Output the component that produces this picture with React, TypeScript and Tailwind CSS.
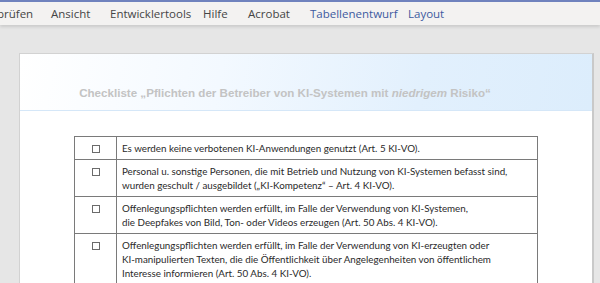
import React from "react";

const tabs = [
  { label: "prüfen", w: "w-[54px]", ml: "-ml-[3px]", active: false },
  { label: "Ansicht", w: "w-[59px]", ml: "", active: false },
  { label: "Entwicklertools", w: "w-[93px]", ml: "", active: false },
  { label: "Hilfe", w: "w-[45px]", ml: "", active: false },
  { label: "Acrobat", w: "w-[62px]", ml: "", active: false },
  { label: "Tabellenentwurf", w: "w-[98px]", ml: "", active: true },
  { label: "Layout", w: "w-[60px]", ml: "", active: true },
];

const rows: { lines: string[]; divider: string }[] = [
  {
    lines: ["Es werden keine verbotenen KI-Anwendungen genutzt (Art. 5 KI-VO)."],
    divider: "border-[#b4b4b4]",
  },
  {
    lines: [
      "Personal u. sonstige Personen, die mit Betrieb und Nutzung von KI-Systemen befasst sind,",
      "wurden geschult / ausgebildet („KI-Kompetenz“ – Art. 4 KI-VO).",
    ],
    divider: "border-[#7a7a7a]",
  },
  {
    lines: [
      "Offenlegungspflichten werden erfüllt, im Falle der Verwendung von KI-Systemen,",
      "die Deepfakes von Bild, Ton- oder Videos erzeugen (Art. 50 Abs. 4 KI-VO).",
    ],
    divider: "border-[#7a7a7a]",
  },
  {
    lines: [
      "Offenlegungspflichten werden erfüllt, im Falle der Verwendung von KI-erzeugten oder",
      "KI-manipulierten Texten, die die Öffentlichkeit über Angelegenheiten von öffentlichem",
      "Interesse informieren (Art. 50 Abs. 4 KI-VO).",
    ],
    divider: "border-[#7a7a7a]",
  },
];

function Box() {
  return <span className="block w-[8px] h-[8px] border border-[#6b6b6b] bg-white" />;
}

export default function App() {
  return (
    <div className="w-[600px] h-[283px] overflow-hidden bg-[#e6e6e6] font-['Open_Sans',sans-serif]">
      {/* ribbon tabs */}
      <div className="h-[25px] border-t-2 border-[#6f82bd] bg-[#f3f2f1] shadow-[0_2px_3px_rgba(0,0,0,0.12)] flex items-center relative z-10">
        {tabs.map((t) => (
          <span
            key={t.label}
            className={`${t.w} ${t.ml} shrink-0 text-[11.5px] whitespace-nowrap ${
              t.active ? "text-[#3d5aa0]" : "text-[#454545]"
            }`}
          >
            {t.label}
          </span>
        ))}
      </div>

      {/* page */}
      <div className="ml-[19px] mt-[28px] w-[575px] h-[240px] bg-white border-t border-l border-[#d2d2d2] border-r-2 border-r-[#c9c9c9]">
        <div className="h-[57px] bg-[linear-gradient(100deg,#ffffff_0%,#f3f9ff_35%,#e2f0fd_70%,#dcedfc_100%)] border-b border-[#d5e7f8] flex items-end justify-center pb-[9px]">
          <p className="font-['Liberation_Sans',Arial,sans-serif] font-bold text-[11.6px] text-[#c3c3c3] whitespace-nowrap pr-[42px]">
            Checkliste „Pflichten der Betreiber von KI-Systemen mit <i>niedrigem</i> Risiko“
          </p>
        </div>

        <div className="ml-[54px] mt-[25px] w-[464px] border border-[#7a7a7a] font-['Lato',sans-serif] text-[9.8px] leading-[14px] text-[#2a2a2a]">
          {rows.map((r, i) => (
            <div key={i} className={`flex ${i > 0 ? `border-t ${r.divider}` : ""}`}>
              <div className="w-[42px] shrink-0 border-r border-[#7a7a7a] flex justify-center pt-[8px]">
                <Box />
              </div>
              <div className="pl-[5px] pt-[4px] pb-[4px]">
                {r.lines.map((l) => (
                  <div key={l} className="whitespace-nowrap">
                    {l}
                  </div>
                ))}
              </div>
            </div>
          ))}
        </div>
      </div>
    </div>
  );
}
